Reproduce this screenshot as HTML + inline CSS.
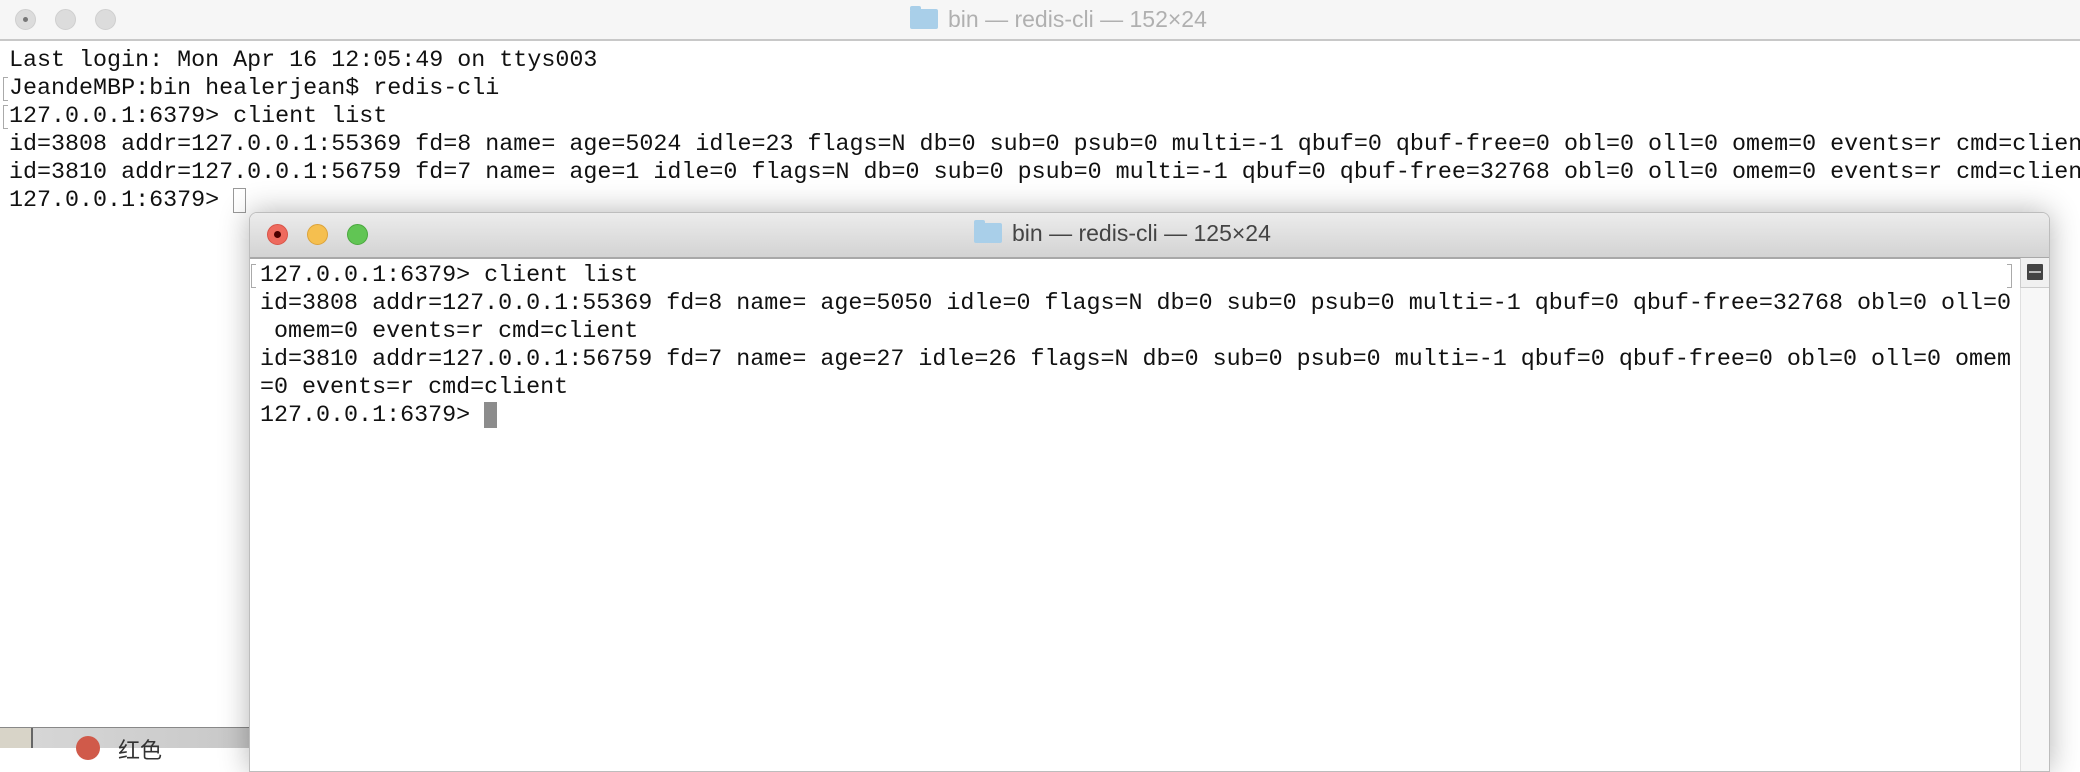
<!DOCTYPE html>
<html><head><meta charset="utf-8"><style>
*{margin:0;padding:0;box-sizing:border-box}
body{width:2080px;height:748px;overflow:hidden;background:#fff;position:relative;font-family:"Liberation Mono",monospace}
.t{position:absolute;white-space:pre;font-size:23.35px;line-height:28px;color:#111}
.dot{position:absolute;width:21px;height:21px;border-radius:50%}
.title{position:absolute;font-family:"Liberation Sans",sans-serif;font-size:23px;color:#b0b0b0;white-space:pre}
.folder{display:inline-block;width:28px;height:20px;background:#a9cfe9;border-radius:2px;vertical-align:-2px;margin-right:10px;position:relative}
.folder:before{content:"";position:absolute;left:0;top:-3px;width:11px;height:4px;background:#a9cfe9;border-radius:2px 2px 0 0}
.br{position:absolute;width:5px;height:24px;border:1px solid #aaa;border-right:none}
</style></head><body>
<div style="position:absolute;left:0;top:0;width:2080px;height:41px;background:#f6f6f6;border-bottom:2px solid #c8c8c8"></div>
<div class="dot" style="left:15px;top:9px;background:#dcdcdc;border:1px solid #cfcfcf"></div>
<div style="position:absolute;left:23px;top:17px;width:5px;height:5px;border-radius:50%;background:#777"></div>
<div class="dot" style="left:55px;top:9px;background:#dcdcdc;border:1px solid #cfcfcf"></div>
<div class="dot" style="left:95px;top:9px;background:#dcdcdc;border:1px solid #cfcfcf"></div>
<div class="title" style="left:910px;top:6px"><span class="folder"></span>bin — redis-cli — 152×24</div>
<div class="t" style="left:9px;top:47px">Last login: Mon Apr 16 12:05:49 on ttys003
JeandeMBP:bin healerjean$ redis-cli
127.0.0.1:6379&gt; client list
id=3808 addr=127.0.0.1:55369 fd=8 name= age=5024 idle=23 flags=N db=0 sub=0 psub=0 multi=-1 qbuf=0 qbuf-free=0 obl=0 oll=0 omem=0 events=r cmd=client
id=3810 addr=127.0.0.1:56759 fd=7 name= age=1 idle=0 flags=N db=0 sub=0 psub=0 multi=-1 qbuf=0 qbuf-free=32768 obl=0 oll=0 omem=0 events=r cmd=client
127.0.0.1:6379&gt; </div>
<div class="br" style="left:3px;top:77px"></div>
<div class="br" style="left:3px;top:105px"></div>
<div style="position:absolute;left:233px;top:188px;width:13px;height:25px;border:1.5px solid #999"></div>
<div style="position:absolute;left:0;top:727px;width:250px;height:21px;background:linear-gradient(90deg,#d8d8d8,#c8c8c8);border-top:1px solid #888"></div>
<div style="position:absolute;left:0;top:728px;width:33px;height:20px;background:#d8d4c8;border-right:2px solid #666"></div>
<div style="position:absolute;left:76px;top:736px;width:24px;height:24px;border-radius:50%;background:#d05a4a"></div>
<div style="position:absolute;left:118px;top:733px;font-family:'Liberation Sans','Noto Sans CJK SC',sans-serif;font-size:22px;color:#333">红色</div>
<div style="position:absolute;left:249px;top:212px;width:1801px;height:560px;background:#fff;border:1px solid #bdbdbd;border-radius:8px 8px 0 0;box-shadow:0 0 30px rgba(0,0,0,.3);overflow:hidden">
<div style="height:46px;background:linear-gradient(#ececec,#d3d3d3);border-bottom:2px solid #a8a8a8"></div>
<div style="position:absolute;left:1770px;top:45px;width:30px;height:520px;background:#f7f7f7;border-left:1px solid #e0e0e0"></div>
<div style="position:absolute;left:1770px;top:45px;width:30px;height:30px;background:#f0f0f0;border-bottom:1px solid #ccc;border-left:1px solid #ccc"></div>
<div style="position:absolute;left:1777px;top:51px;width:16px;height:16px;background:#444;border-radius:1px"></div>
<div style="position:absolute;left:1779px;top:58px;width:12px;height:2px;background:#bbb"></div>
</div>
<div class="dot" style="left:267px;top:224px;background:#ee6a5e;border:1px solid #d85448"></div>
<div style="position:absolute;left:274px;top:231px;width:7px;height:7px;border-radius:50%;background:#4d0000"></div>
<div class="dot" style="left:307px;top:224px;background:#f5bf4f;border:1px solid #dca33a"></div>
<div class="dot" style="left:347px;top:224px;background:#61c554;border:1px solid #4aa83e"></div>
<div class="title" style="left:974px;top:220px;color:#444"><span class="folder"></span>bin — redis-cli — 125×24</div>
<div class="t" style="left:260px;top:262px">127.0.0.1:6379&gt; client list
id=3808 addr=127.0.0.1:55369 fd=8 name= age=5050 idle=0 flags=N db=0 sub=0 psub=0 multi=-1 qbuf=0 qbuf-free=32768 obl=0 oll=0
 omem=0 events=r cmd=client
id=3810 addr=127.0.0.1:56759 fd=7 name= age=27 idle=26 flags=N db=0 sub=0 psub=0 multi=-1 qbuf=0 qbuf-free=0 obl=0 oll=0 omem
=0 events=r cmd=client
127.0.0.1:6379&gt; </div>
<div class="br" style="left:251px;top:264px"></div>
<div style="position:absolute;left:2007px;top:264px;width:5px;height:24px;border:1px solid #aaa;border-left:none"></div>
<div style="position:absolute;left:484px;top:402px;width:13px;height:26px;background:#8c8c8c"></div>
</body></html>
